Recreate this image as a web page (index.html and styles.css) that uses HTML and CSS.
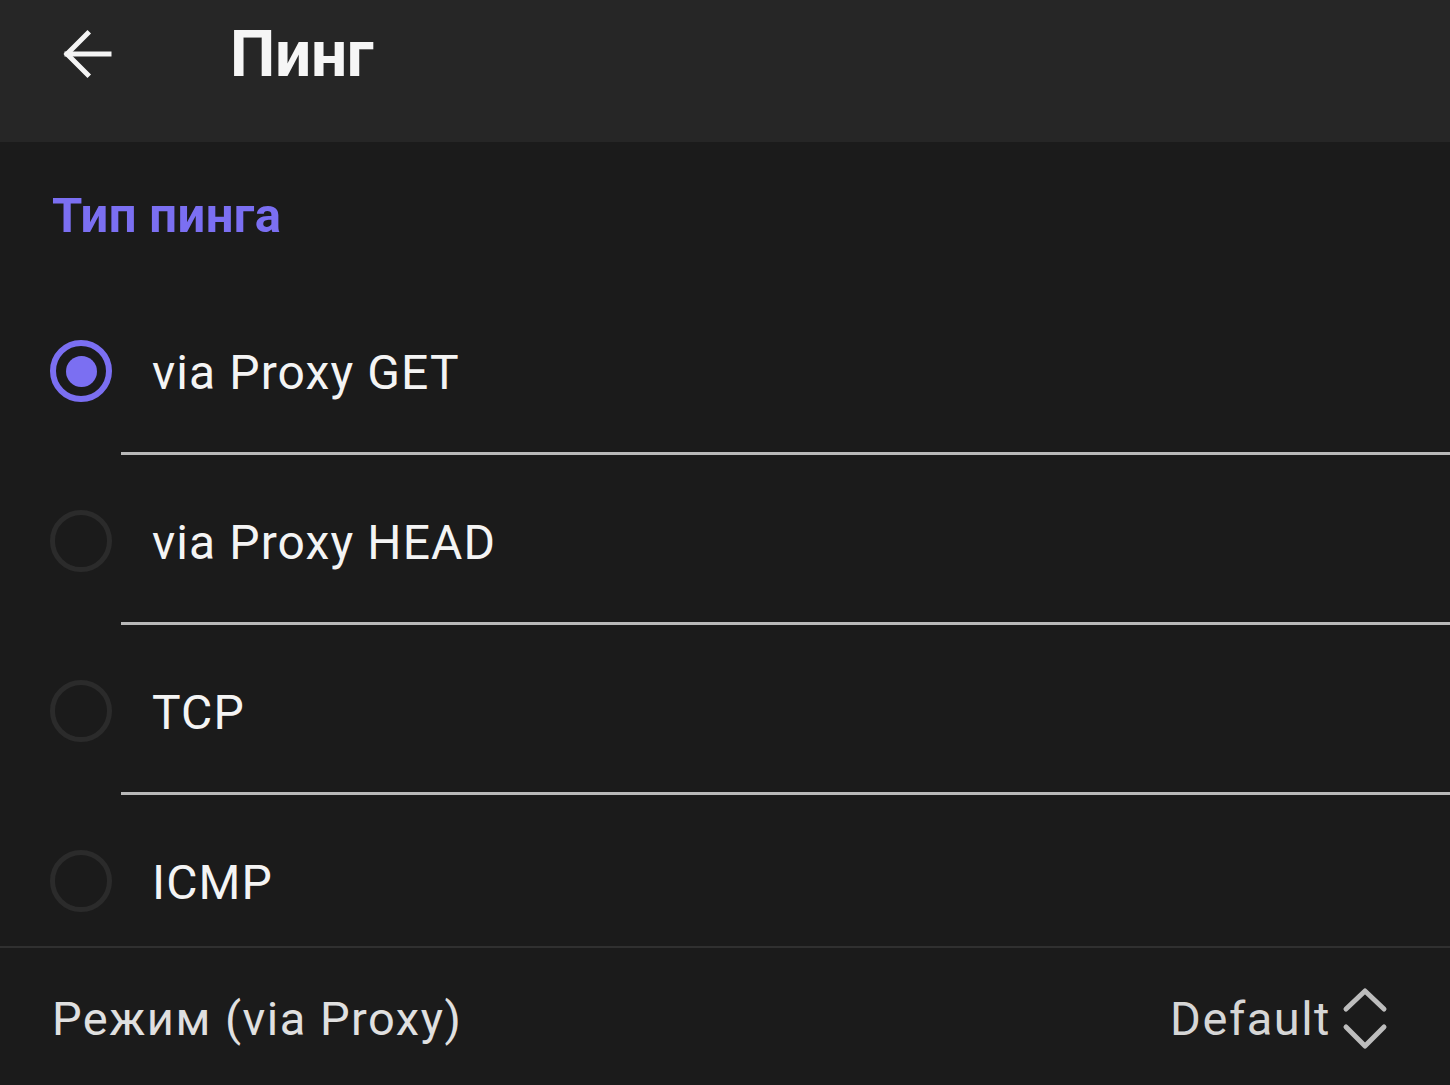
FILE: index.html
```html
<!DOCTYPE html>
<html lang="ru">
<head>
<meta charset="utf-8">
<title>Пинг</title>
<link rel="stylesheet" href="styles.css">
</head>
<body>
<header class="appbar">
  <div class="appbar-inner">
    <button class="back" aria-label="Назад">
      <svg width="56" height="56" viewBox="0 0 56 56" fill="none" stroke="#f4f4f4" stroke-width="5" stroke-linecap="square">
        <path d="M9 27H51"/>
        <path d="M29.5 6.5L9 27L29.5 47.5"/>
      </svg>
    </button>
    <h1 class="title">Пинг</h1>
  </div>
</header>
<main class="content">
  <h2 class="section-title">Тип пинга</h2>
  <ul class="options">
    <li class="option">
      <div class="option-body">
        <span class="radio checked"><span class="dot"></span></span>
        <span class="label">via Proxy GET</span>
      </div>
      <div class="divider"></div>
    </li>
    <li class="option">
      <div class="option-body">
        <span class="radio"></span>
        <span class="label">via Proxy HEAD</span>
      </div>
      <div class="divider"></div>
    </li>
    <li class="option">
      <div class="option-body">
        <span class="radio"></span>
        <span class="label">TCP</span>
      </div>
      <div class="divider"></div>
    </li>
    <li class="option last">
      <div class="option-body">
        <span class="radio"></span>
        <span class="label">ICMP</span>
      </div>
    </li>
  </ul>
  <div class="setting">
    <span class="setting-label">Режим (via Proxy)</span>
    <span class="setting-value">
      Default
      <svg width="46" height="64" viewBox="0 0 46 64" fill="none" stroke="#bdbdbd" stroke-width="5" stroke-linecap="round" stroke-linejoin="round">
        <path d="M4 22L23 4L42 22"/>
        <path d="M4 40L23 59L42 40"/>
      </svg>
    </span>
  </div>
</main>
</body>
</html>
```

FILE: styles.css
```css
* { box-sizing: border-box; }
html, body {
  margin: 0;
  padding: 0;
  background: #1b1b1b;
  font-family: Roboto, "Noto Sans", "Liberation Sans", sans-serif;
  color: #f2f2f2;
  width: 1450px;
  height: 1085px;
  overflow: hidden;
}
.appbar {
  height: 142px;
  background: #262626;
}
.appbar-inner {
  height: 110px;
  display: flex;
  align-items: center;
}
.back {
  width: 56px;
  height: 56px;
  margin-left: 58px;
  padding: 0;
  border: 0;
  background: none;
  display: flex;
}
.title {
  margin: 0 0 0 116px;
  font-size: 64px;
  font-weight: 700;
  color: #f6f6f6;
  line-height: 1;
  letter-spacing: -0.3px;
}
.content {
  display: flex;
  flex-direction: column;
}
.section-title {
  margin: 0;
  height: 143px;
  padding: 46px 0 0 52px;
  font-size: 49px;
  font-weight: 700;
  color: #7b6ff2;
  line-height: 56px;
  letter-spacing: 0.4px;
}
.options {
  list-style: none;
  margin: 0;
  padding: 0;
}
.option-body {
  display: flex;
  align-items: center;
  padding: 55px 0 50px 50px;
}
.option.last .option-body { padding-bottom: 34px; }
.radio {
  width: 62px;
  height: 62px;
  border-radius: 50%;
  border: 5px solid #2b2b2b;
  display: flex;
  align-items: center;
  justify-content: center;
  flex: none;
}
.radio.checked {
  border: 6px solid #7b6ff2;
}
.dot {
  width: 31px;
  height: 31px;
  border-radius: 50%;
  background: #7b6ff2;
}
.label {
  margin-left: 40px;
  font-size: 48px;
  color: #f4f4f4;
  line-height: 1;
  letter-spacing: 1.1px;
  padding-top: 4px;
}
.divider {
  height: 3px;
  margin-left: 121px;
  background: #b9b9b9;
}
.setting {
  border-top: 2px solid #303030;
  height: 139px;
  display: flex;
  align-items: center;
  justify-content: space-between;
  padding: 4px 62px 0 52px;
}
.setting-label {
  font-size: 47px;
  color: #e0e0e0;
  letter-spacing: 1.5px;
}
.setting-value {
  display: flex;
  align-items: center;
  gap: 11px;
  font-size: 47px;
  color: #d6d6d6;
  letter-spacing: 1.5px;
}
```
